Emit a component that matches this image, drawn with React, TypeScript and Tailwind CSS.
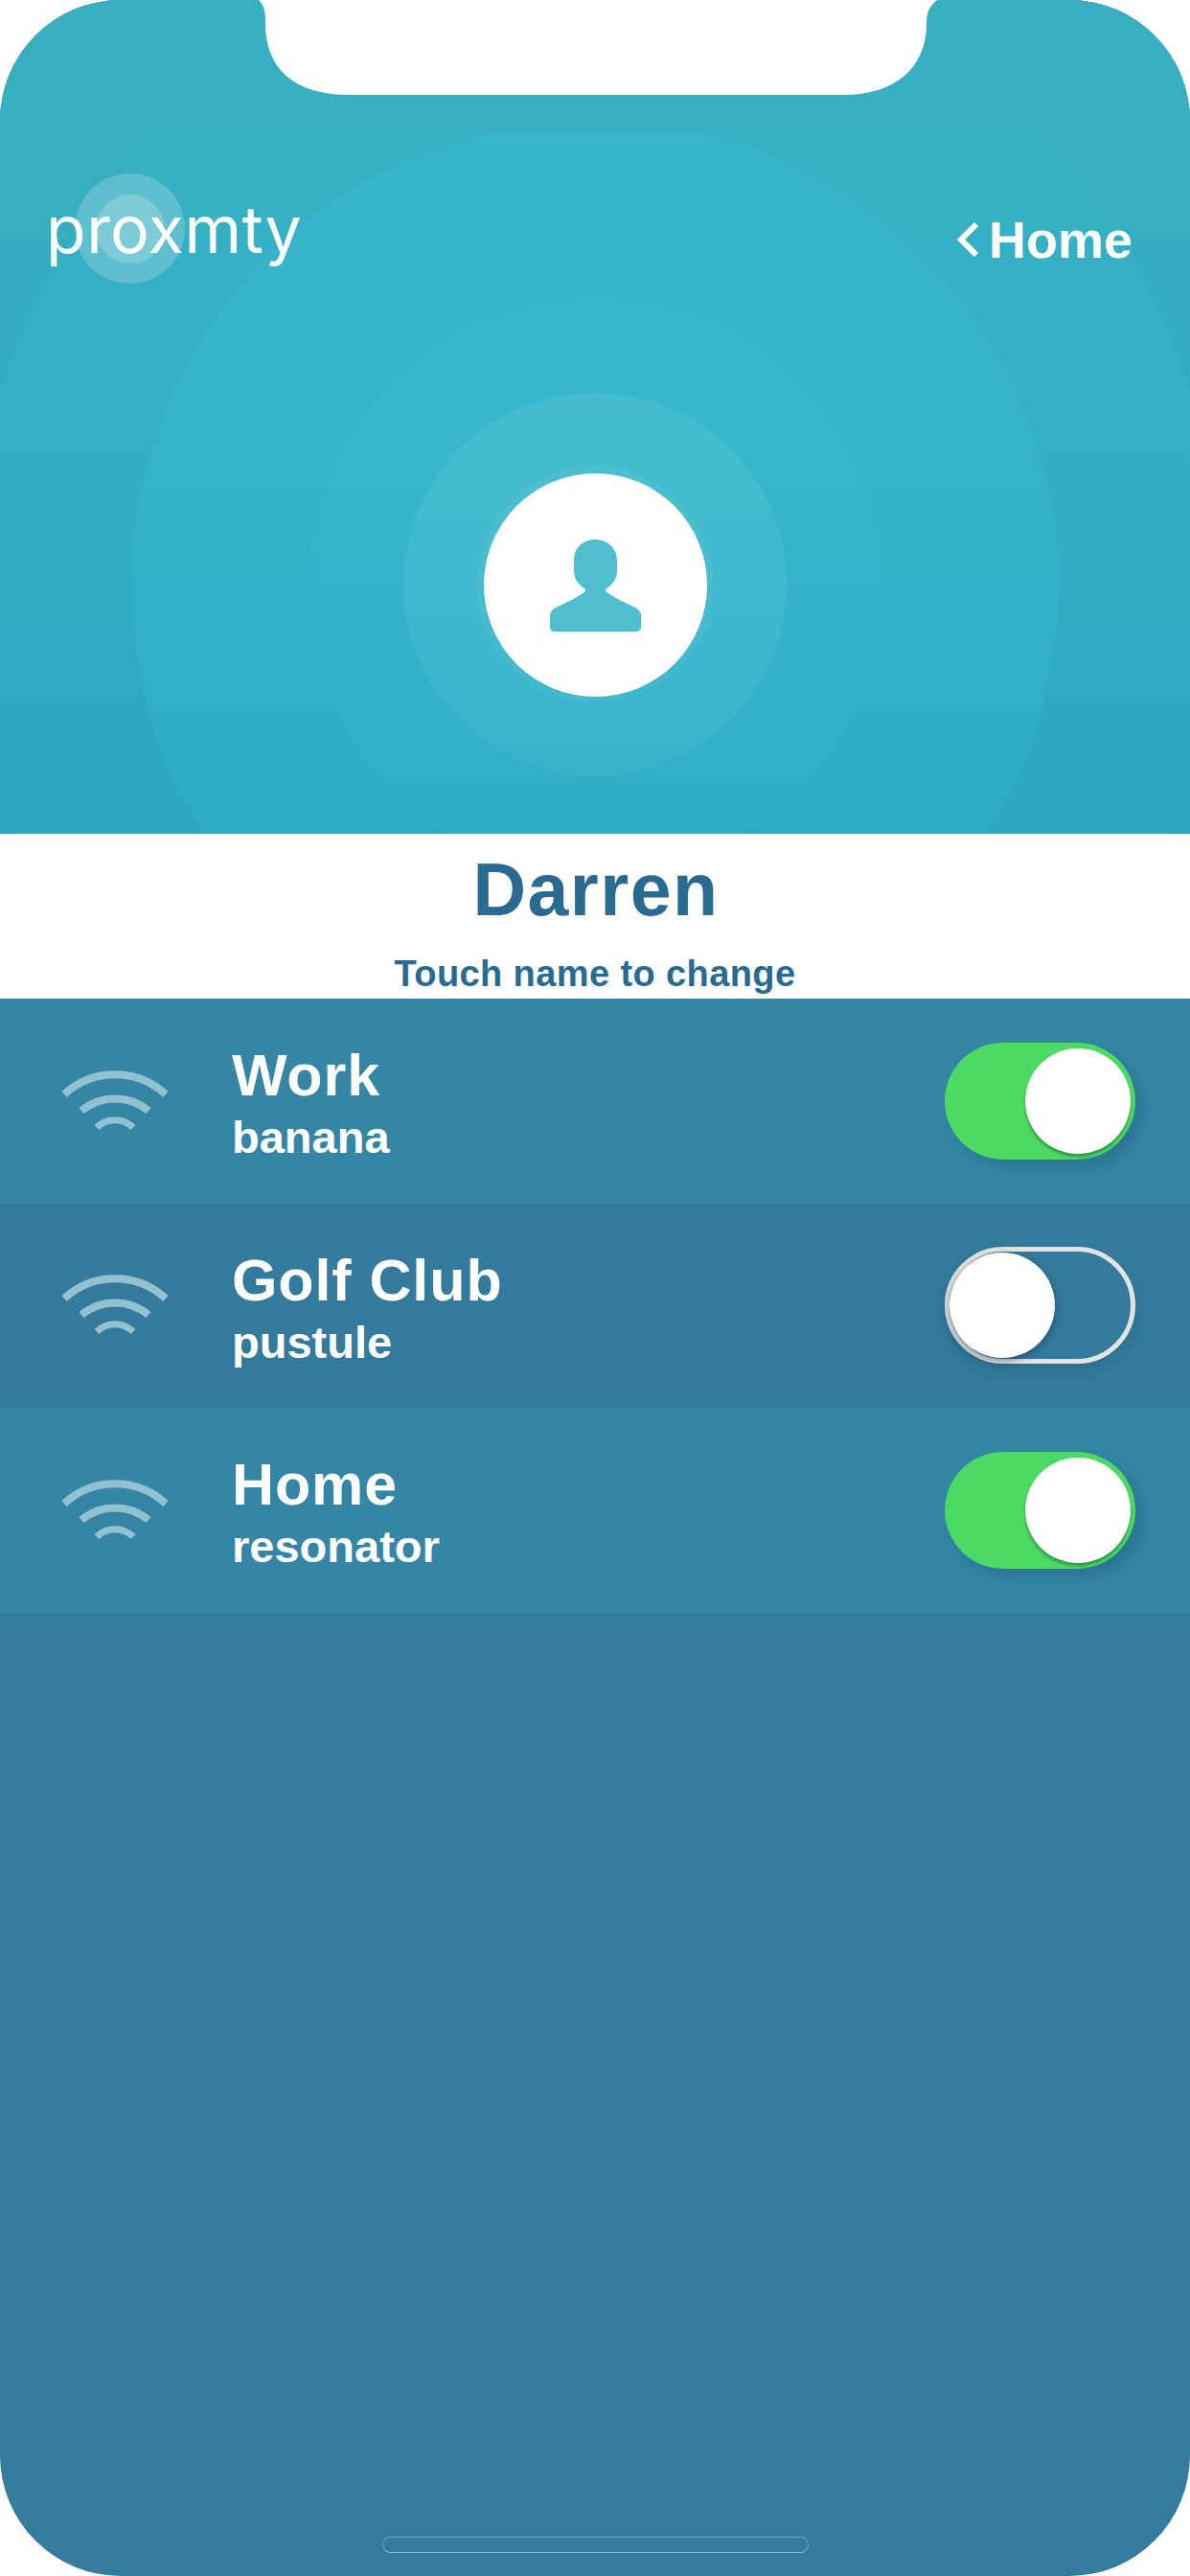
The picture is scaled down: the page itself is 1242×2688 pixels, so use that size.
const sans = "font-['Liberation_Sans',Arial,sans-serif]"

const networks = [
  { name: 'Work', word: 'banana', on: true, tint: 'bg-[#3586a5]' },
  { name: 'Golf Club', word: 'pustule', on: false, tint: 'bg-[#347a9c]' },
  { name: 'Home', word: 'resonator', on: true, tint: 'bg-[#3586a5]' },
]

const Wifi = () => (
  <svg width="120" height="70" viewBox="0 0 120 70" fill="none" stroke="#93c1d0" strokeWidth="8" className="shrink-0">
    <path d="M7 28 A78 78 0 0 1 113 28" />
    <path d="M25 45 A55 55 0 0 1 95 45" />
    <path d="M41 62.5 A27 27 0 0 1 79 62.5" strokeWidth="7" />
  </svg>
)

const Toggle = ({ on }: { on: boolean }) =>
  on ? (
    <div className="flex h-[122px] w-[199px] items-center justify-end rounded-full bg-[#4cd964] pr-[5px] shadow-[8px_8px_16px_rgba(0,40,70,0.18)]">
      <div className="size-[110px] rounded-full bg-white shadow-[0_3px_3px_rgba(20,110,50,0.6)]" />
    </div>
  ) : (
    <div className="flex h-[122px] w-[199px] items-center rounded-full border-[5px] border-[#e3e3e3] shadow-[0_6px_14px_rgba(0,40,70,0.15)]">
      <div className="size-[110px] rounded-full bg-white shadow-[0_3px_8px_rgba(0,30,50,0.45)]" />
    </div>
  )

const Row = ({ name, word, on, tint }: (typeof networks)[number]) => (
  <div className={`flex h-[213.5px] items-center pl-[60px] pr-[57px] ${tint}`}>
    <Wifi />
    <div className="ml-[62px] flex flex-col pt-[4px] text-white">
      <span className="text-[61px] leading-[66px] font-bold tracking-[0.9px]">{name}</span>
      <span className="mt-[7px] text-[47px] leading-[50px] font-bold">{word}</span>
    </div>
    <div className="ml-auto">
      <Toggle on={on} />
    </div>
  </div>
)

const Rings = () => (
  <div className="absolute inset-x-0 top-[137px] bottom-0 overflow-hidden">
    <div className="absolute top-[-181px] left-[-33px] size-[1308px] rounded-full bg-[#3dc4d8]/[0.12]" />
    <div className="absolute top-[-11px] left-[137px] size-[968px] rounded-full bg-[#3dc4d8]/30" />
    <div className="absolute top-[173px] left-[321px] size-[600px] rounded-full bg-[#3cc4d8]/20" />
    <div className="absolute top-[273px] left-[421px] size-[400px] rounded-full bg-white/[0.07]" />
    <div className="absolute top-[349px] left-[497px] size-[248px] rounded-full bg-white/[0.05]" />
    <div className="absolute inset-0 bg-gradient-to-b from-transparent via-transparent to-[#2ba4bf]/40" />
  </div>
)

export default function App() {
  return (
    <div className={`relative h-[2688px] w-[1242px] overflow-hidden bg-white ${sans}`}>
      <div className="flex h-full flex-col overflow-hidden rounded-[126px] bg-[#347b9d]">
        <header className="relative h-[870px] shrink-0 bg-gradient-to-b from-[#39afc1] to-[#2da7c1]">
          <Rings />
          <div className="relative flex items-start justify-between pt-[181px] pl-[48px] pr-[60px]">
            <div className="relative h-[116px] w-[266px]">
              <div className="absolute top-0 left-[30px] flex size-[115px] items-center justify-center rounded-full bg-white/20">
                <div className="size-[72px] rounded-full bg-white/20" />
              </div>
              <span className="absolute top-[8px] left-0 font-['Inter',sans-serif] text-[68px] leading-[100px] font-normal tracking-[0.5px] text-white">
                proxmty
              </span>
            </div>
            <div className="mt-[39px] flex items-center text-[54px] leading-[60px] font-bold text-white">
              <svg width="24" height="36" viewBox="0 0 24 36" fill="none" stroke="white" strokeWidth="6" className="mr-[10px]">
                <path d="M21 2 L5 18 L21 34" />
              </svg>
              Home
            </div>
          </div>
          <div className="relative mt-[197px] flex justify-center">
            <div className="flex size-[233px] items-center justify-center rounded-full bg-white">
              <svg width="95" height="96" viewBox="0 0 95 96" fill="#4fbfd0">
                <path d="M47 0 C60 0 70 9 70 22 L70 32 C70 42 65 47 58 52 L58 54 C66 60 78 66 89 71 C93 73 95 76 95 80 L95 91 C95 94 93 96 90 96 L5 96 C2 96 0 94 0 91 L0 80 C0 76 2 73 6 71 C17 66 29 60 37 54 L37 52 C30 47 25 42 25 32 L25 22 C25 9 34 0 47 0 Z" />
              </svg>
            </div>
          </div>
        </header>

        <section className="flex h-[172px] shrink-0 flex-col items-center bg-white text-[#2a6a90]">
          <h1 className="mt-[14px] ml-[2px] text-[77px] leading-[88px] font-bold tracking-[1.5px]">Darren</h1>
          <p className="mt-[22px] text-[38px] leading-[44px] font-bold tracking-[0.4px]">Touch name to change</p>
        </section>

        {networks.map((n) => (
          <Row key={n.name} {...n} />
        ))}
      </div>

      <svg width="708" height="99" viewBox="0 0 708 99" fill="white" className="absolute top-0 left-[270px]">
        <path d="M0 0 C5 5 7 10 7 25 C7 70 35 99 95 99 L610 99 C665 99 697 70 697 25 C697 10 702 5 708 0 Z" />
      </svg>
      <div className="absolute top-[2647px] left-[399px] h-[17px] w-[445px] rounded-full border border-white/30 border-b-white/50" />
    </div>
  )
}
